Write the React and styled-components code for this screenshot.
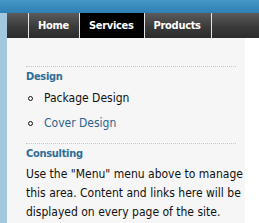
import React from "react";
import styled, { createGlobalStyle } from "styled-components";

const GlobalStyle = createGlobalStyle`
  html, body {
    margin: 0;
    padding: 0;
    background: #ffffff;
  }
  body {
    font-family: "DejaVu Sans", "Liberation Sans", sans-serif;
    font-stretch: semi-condensed;
    font-size: 12px;
  }
`;

const Page = styled.div`
  width: 259px;
  height: 223px;
  overflow: hidden;
  display: flex;
  flex-direction: column;
`;

const TopBand = styled.div`
  flex-shrink: 0;
  height: 13px;
  background: linear-gradient(#4597c8, #2f7fb2);
`;

const Body = styled.div`
  flex: 1;
  min-height: 0;
  display: flex;
`;

const SideStrip = styled.div`
  width: 7px;
  flex-shrink: 0;
  background: #a2c7df;
`;

const Main = styled.div`
  flex: 1;
  display: flex;
  flex-direction: column;
`;

const NavBar = styled.ul`
  flex-shrink: 0;
  list-style: none;
  margin: 0;
  padding: 0 0 0 21px;
  height: 25px;
  display: flex;
  background: linear-gradient(#5b5b5b, #3a3a3a 55%, #2c2c2c);
`;

const Tab = styled.li`
  display: flex;
  align-items: center;
  padding: 0 10px 0 9px;
  border-left: 1.5px solid #e6e6e6;
  border-right: ${(p) => (p.last ? "1.5px solid #e6e6e6" : "none")};
  background: ${(p) => (p.active ? "#000" : "transparent")};
  color: #fff;
  font-weight: bold;
  font-size: 11px;
  letter-spacing: -0.3px;
`;

const ContentRow = styled.div`
  flex: 1;
  display: flex;
`;

const Content = styled.div`
  width: 238px;
  flex-shrink: 0;
  background: #f6f6f6;
  padding: 0 0 0 19px;
  box-sizing: border-box;
`;

const Edge = styled.div`
  width: 4px;
  background-image: radial-gradient(#d8d8d8 45%, transparent 50%);
  background-size: 2px 2px;
`;

const Section = styled.div`
  width: 210px;
  border-top: 1px dotted #c8c8c8;
  margin-top: ${(p) => p.top}px;
`;

const Heading = styled.h3`
  margin: 0;
  padding-top: 2px;
  font-size: 11px;
  line-height: 15px;
  letter-spacing: -0.3px;
  font-weight: bold;
  color: #2f6d98;
`;

const List = styled.ul`
  list-style: none;
  margin: 2px 0 0;
  padding: 0;
`;

const Item = styled.li`
  position: relative;
  padding-left: 18px;
  line-height: 25px;
  color: ${(p) => (p.link ? "#2c6490" : "#111")};
  &::before {
    content: "";
    position: absolute;
    left: 2px;
    top: 10px;
    width: 3px;
    height: 3px;
    border: 1.3px solid #111;
    border-radius: 50%;
  }
`;

const Text = styled.p`
  margin: 4px 0 0;
  width: 225px;
  line-height: 19px;
  color: #111;
`;

export default function App() {
  return (
    <Page>
      <GlobalStyle />
      <TopBand />
      <Body>
        <SideStrip />
        <Main>
          <NavBar>
            <Tab>Home</Tab>
            <Tab active>Services</Tab>
            <Tab last>Products</Tab>
          </NavBar>
          <ContentRow>
            <Content>
              <Section top={28}>
                <Heading>Design</Heading>
                <List>
                  <Item>Package Design</Item>
                  <Item link>Cover Design</Item>
                </List>
              </Section>
              <Section top={7}>
                <Heading>Consulting</Heading>
                <Text>
                  Use the "Menu" menu above to manage this area. Content and
                  links here will be displayed on every page of the site.
                </Text>
              </Section>
            </Content>
            <Edge />
          </ContentRow>
        </Main>
      </Body>
    </Page>
  );
}
